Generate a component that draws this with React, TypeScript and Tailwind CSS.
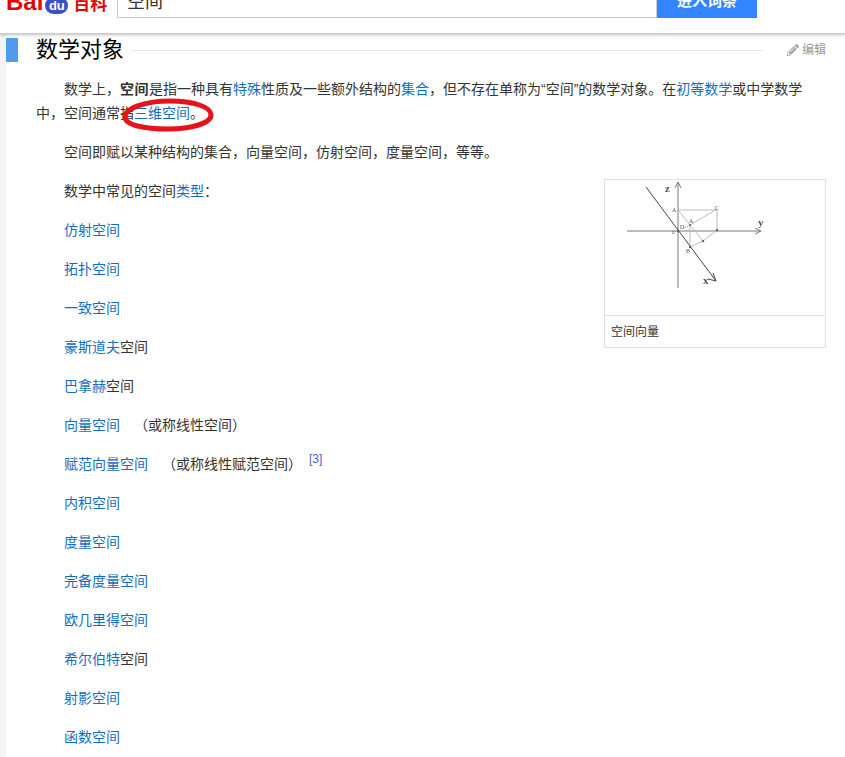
import { FaPencilAlt } from "react-icons/fa";

const link = "text-[#136ec2]";

// rows of the space list: [linked part, plain part]
const rows: [string, string][] = [
	["仿射空间", ""],
	["拓扑空间", ""],
	["一致空间", ""],
	["豪斯道夫", "空间"],
	["巴拿赫", "空间"],
	["向量空间", "　（或称线性空间）"],
];

const rowsAfter: [string, string][] = [
	["内积空间", ""],
	["度量空间", ""],
	["完备度量空间", ""],
	["欧几里得空间", ""],
	["希尔伯特", "空间"],
	["射影空间", ""],
	["函数空间", ""],
];

function Row({ text, rest }: { text: string; rest: string }) {
	return (
		<p className="indent-7 mb-[15px]">
			<a className={link}>{text}</a>
			{rest}
		</p>
	);
}

function Diagram() {
	return (
		<svg viewBox="0 0 220 135" className="block w-[220px] h-[135px] blur-[0.4px]">
			<g fill="none" stroke="#777" strokeWidth="1">
				<path d="M22 51H155M73 2V108" />
				<path d="M70 8L73 2L76 8M150 48L156 51L150 54" />
				<path stroke="#bbb" d="M73 30H112V50L98 61M73 30L98 61L85 67M85 45L112 29M85 45V67M79 48L85 45" />
				<path stroke="#444" d="M41 7L111 101M103 99L111 101L108 93" />
			</g>
			<g fill="#666">
				<circle cx="85" cy="45" r="1" />
				<circle cx="98" cy="61" r="1.2" />
				<circle cx="112" cy="50" r="1.2" />
				<circle cx="85" cy="67" r="1.2" />
				<circle cx="73" cy="51" r="1.2" />
			</g>
			<g fill="#555" fontFamily="Liberation Serif, serif" fontSize="6">
				<text x="60" y="12" fontSize="11" fontWeight="700">z</text>
				<text x="153" y="46" fontSize="11" fontWeight="700">y</text>
				<text x="98" y="104" fontSize="11" fontWeight="700">x</text>
				<text x="67" y="32">A</text>
				<text x="110" y="30">C</text>
				<text x="84" y="43">A</text>
				<text x="75" y="49">D</text>
				<text x="67" y="54">a</text>
				<text x="81" y="73">B</text>
			</g>
		</svg>
	);
}

export default function App() {
	return (
		<div className="relative h-[757px] w-[845px] overflow-hidden bg-white text-[14px] leading-6 text-[#333] [text-spacing-trim:space-all] font-['Liberation_Sans','Noto_Sans_CJK_SC',sans-serif]">
			<header className="h-[34px] overflow-hidden border-b border-[#ccc] shadow-[0_1px_3px_rgba(0,0,0,0.25)] relative z-10 bg-white">
				<div className="flex items-end h-[18px] ml-[6px]">
					<div className="flex items-end w-[111px] h-[18px] overflow-hidden">
						<span className="text-[24px] leading-[22px] mb-[5px] font-bold text-[#e10601]">Bai</span>
						<span className="ml-[2px] mb-[4px] flex items-center justify-center w-[23px] h-[17px] rounded-full bg-[#3a4fc8] text-white text-[13px] leading-none font-bold">
							du
						</span>
						<span className="ml-[5px] mb-[3px] text-[17px] leading-[20px] font-bold text-[#e10601]">百科</span>
					</div>
					<div className="w-[540px] h-[34px] border border-[#ccc] px-[9px] text-[18px] flex items-end overflow-hidden">
						<span className="mb-[2px] leading-[26px]">空间</span>
					</div>
					<div className="w-[100px] h-[34px] bg-[#3385ff] text-white text-[15px] font-bold flex items-end justify-center">
						<span className="leading-[26px] mb-[4px]">进入词条</span>
					</div>
				</div>
			</header>
			<div className="flex h-[723px]">
				<aside className="w-[6px] bg-[#f4f4f4] shrink-0" />
				<main className="flex-1 pt-[4px] pr-[19px]">
					<div className="flex items-center h-6">
						<div className="w-3 h-6 bg-[#4f9cee]" />
						<h2 className="ml-[18px] text-[22px] leading-6 text-black">数学对象</h2>
						<div className="ml-2 flex-1 h-px bg-[#e8e8e8]" />
						<a className="ml-6 flex items-center text-[12px] text-[#999]">
							<FaPencilAlt className="w-3 h-3 mr-[3px] text-[#aaa]" />
							编辑
						</a>
					</div>
					<div className="mt-[15px] ml-[30px]">
						<p className="indent-7 mb-[15px]">
							数学上，<b className="tracking-[0.5px]">空间</b>是指一种具有<a className={link}>特殊</a>性质及一些额外结构的<a className={link}>集合</a>，但不存在单称为“空间”的数学对象。在<a className={link}>初等</a><a className={link}>数学</a>或中学数学中，空间通常指<a className={link}>三维空间</a>。
						</p>
						<p className="indent-7 mb-[15px]">空间即赋以某种结构的集合，向量空间，仿射空间，度量空间，等等。</p>
						<figure className="float-right w-[222px] h-[169px] border border-[#e0e0e0]">
							<Diagram />
							<figcaption className="border-t border-[#e0e0e0] px-[6px] h-8 text-[12px] leading-8">空间向量</figcaption>
						</figure>
						<p className="indent-7 mb-[15px]">
							数学中常见的空间<a className={link}>类型</a>：
						</p>
						{rows.map(([text, rest]) => (
							<Row key={text} text={text} rest={rest} />
						))}
						<p className="indent-7 mb-[15px]">
							<a className={link}>赋范向量空间</a>　（或称线性赋范空间）
							<sup className="ml-[7px] text-[12px] leading-none text-[#4a5fd8]">[3]</sup>
						</p>
						{rowsAfter.map(([text, rest]) => (
							<Row key={text} text={text} rest={rest} />
						))}
					</div>
				</main>
			</div>
			<svg viewBox="0 0 92 34" className="absolute left-[122px] top-[98px] w-[92px] h-[34px]">
				<path
					d="M3 19C3 10 24 3 48 3C72 3 89 9 89 17C89 25 70 31 46 31C22 31 3 27 3 19Z"
					fill="none"
					stroke="#e5141c"
					strokeWidth="5"
				/>
			</svg>
		</div>
	);
}
